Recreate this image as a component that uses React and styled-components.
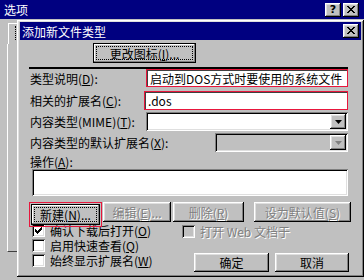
import React from "react";
import styled, { createGlobalStyle } from "styled-components";

const GlobalStyle = createGlobalStyle`
  * { box-sizing: border-box; }
  body { margin: 0; background: #c0c0c0; }
`;

const FONT = `"Noto Sans CJK SC", "Noto Sans", sans-serif`;
const RAISED = `inset -1px -1px #000, inset 1px 1px #fff, inset -2px -2px #808080, inset 2px 2px #dfdfdf`;
const SUNKEN = `inset 1px 1px #808080, inset -1px -1px #fff, inset 2px 2px #000, inset -2px -2px #dfdfdf`;
const MARK = "#e8163c";

const Screen = styled.div`
  position: relative;
  width: 364px;
  height: 280px;
  overflow: hidden;
  background: #c0c0c0;
  font-family: ${FONT};
  font-size: 12px;
  line-height: 13px;
  color: #000;
`;

const TitleBar = styled.div`
  display: flex;
  align-items: center;
  justify-content: space-between;
  height: ${(p) => p.$h}px;
  padding: 0 ${(p) => p.$pr}px 0 ${(p) => p.$pl}px;
  background: #000080;
  color: #fff;
`;

const TitleText = styled.span`
  font-size: 12px;
`;

const TitleButtons = styled.div`
  display: flex;
  gap: 2px;
`;

const CapButton = styled.div`
  display: flex;
  align-items: center;
  justify-content: center;
  width: 16px;
  height: 14px;
  background: #c0c0c0;
  box-shadow: ${RAISED};
  color: #000;
  font-family: "DejaVu Sans", sans-serif;
  font-weight: bold;
  font-size: 11px;
  padding-bottom: 1px;
`;

const OuterBody = styled.div`
  height: 258px;
  border-bottom: 1px solid #404040;
  padding-left: 7px;
`;

const TabHead = styled.div`
  width: 10px;
  height: 21px;
  margin: 4px 0 0 1px;
  border-top: 1px solid #fff;
  border-left: 1px solid #fff;
  padding: 2px 0 0 6px;
`;

const FocusDots = styled.div`
  width: 1px;
  height: 14px;
  border-left: 1px dotted #000;
`;

const TabPanel = styled.div`
  width: 10px;
  height: 208px;
  border-left: 1px solid #fff;
  border-bottom: 1px solid #404040;
`;

const Dialog = styled.div`
  position: absolute;
  left: 17px;
  top: 20px;
  width: 347px;
  height: 257px;
  padding: 2px 3px 3px 3px;
  background: #c0c0c0;
  box-shadow: ${RAISED};
`;

const Body = styled.div`
  display: flex;
  flex-direction: column;
  padding: 0 13px 0 10px;
`;

const Button = styled.div`
  position: relative;
  display: flex;
  align-items: center;
  justify-content: center;
  flex: none;
  width: ${(p) => p.$w}px;
  height: ${(p) => p.$h || 20}px;
  margin-left: ${(p) => p.$ml || 0}px;
  background: #c0c0c0;
  box-shadow: ${(p) =>
    p.$default
      ? `inset 0 0 0 1px #000, inset -2px -2px #808080, inset 2px 2px #fff`
      : RAISED};
  color: ${(p) => (p.$disabled ? "#808080" : "#000")};
  text-shadow: ${(p) => (p.$disabled ? "1px 1px 0 #fff" : "none")};
  white-space: nowrap;
`;

const Focus = styled.span`
  display: flex;
  align-items: center;
  justify-content: center;
  position: absolute;
  inset: 3px;
  border: 1px dotted #000;
`;

const IconRow = styled.div`
  display: flex;
  margin: 3px 0 0 63px;
`;

const Separator = styled.div`
  height: 2px;
  margin: 4px 0 0 -1px;
  background: #000;
`;

const Field = styled.div`
  display: flex;
  align-items: center;
  justify-content: space-between;
  height: ${(p) => p.$h}px;
  margin-top: ${(p) => p.$mt}px;
  white-space: nowrap;
`;

const Label = styled.span`
  white-space: nowrap;
`;

const TextBox = styled.div`
  display: flex;
  align-items: center;
  width: ${(p) => p.$w}px;
  height: 100%;
  padding-left: 3px;
  background: #fff;
  border: 1px solid ${MARK};
  box-shadow: inset 1px 1px #404040;
  white-space: nowrap;
  overflow: hidden;
`;

const Combo = styled.div`
  display: flex;
  justify-content: flex-end;
  align-items: flex-start;
  width: ${(p) => p.$w}px;
  height: 100%;
  padding: 2px;
  background: ${(p) => (p.$disabled ? "#c0c0c0" : "#fff")};
  box-shadow: ${SUNKEN};
`;

const DropButton = styled.div`
  display: flex;
  align-items: center;
  justify-content: center;
  width: 16px;
  height: 100%;
  background: #c0c0c0;
  box-shadow: ${RAISED};
  color: ${(p) => (p.$disabled ? "#808080" : "#000")};
`;

const ListBox = styled.div`
  height: 27px;
  margin: 1px 0 0 2px;
  background: #fff;
  box-shadow: ${SUNKEN};
`;

const ButtonRow = styled.div`
  display: flex;
  align-items: flex-start;
  margin: 6px 0 0 -1px;
`;

const MarkBox = styled.div`
  position: relative;
  z-index: 1;
  padding: 1px;
  border: 1px solid ${MARK};
`;

const Lower = styled.div`
  display: grid;
  grid-template-columns: 150px 1fr;
  margin: -3px 0 0 2px;
`;

const Checks = styled.div`
  display: flex;
  flex-direction: column;
  gap: 2px;
`;

const CheckRow = styled.div`
  display: flex;
  align-items: center;
  gap: 5px;
  height: 13px;
  line-height: 12px;
  white-space: nowrap;
  color: ${(p) => (p.$disabled ? "#808080" : "#000")};
  text-shadow: ${(p) => (p.$disabled ? "1px 1px 0 #fff" : "none")};
`;

const Box = styled.span`
  display: flex;
  align-items: center;
  justify-content: center;
  flex: none;
  width: 13px;
  height: 13px;
  background: ${(p) => (p.$disabled ? "#c0c0c0" : "#fff")};
  box-shadow: ${SUNKEN};
`;

const RightCol = styled.div`
  display: flex;
  flex-direction: column;
  padding-top: 1px;
`;

const DialogButtons = styled.div`
  display: flex;
  gap: 6px;
  margin: 15px 0 0 12px;
`;

const Close = () => (
  <svg width="8" height="7" viewBox="0 0 8 7">
    <path d="M0 0h2v1h1v1h2V1h1V0h2v1H7v1H6v1H5v1h1v1h1v1h1v1H6V6H5V5H3v1H2v1H0V6h1V5h1V4h1V3H2V2H1V1H0z" fill="#000" />
  </svg>
);

const Arrow = () => (
  <svg width="7" height="4" viewBox="0 0 7 4">
    <path d="M0 0h7L3.5 4z" fill="currentColor" />
  </svg>
);

const Tick = () => (
  <svg width="7" height="7" viewBox="0 0 7 7">
    <path d="M0 2h1v1h1v1h1V3h1V2h1V1h1V0h1v3H6v1H5v1H4v1H3v1H2V6H1V5H0z" fill="#000" />
  </svg>
);

const Check = ({ checked, disabled, children }) => (
  <CheckRow $disabled={disabled}>
    <Box $disabled={disabled}>{checked && <Tick />}</Box>
    <span>{children}</span>
  </CheckRow>
);

export default function App() {
  return (
    <Screen>
      <GlobalStyle />
      <TitleBar $h={19} $pl={4} $pr={5}>
        <TitleText>选项</TitleText>
        <TitleButtons>
          <CapButton>?</CapButton>
          <CapButton>
            <Close />
          </CapButton>
        </TitleButtons>
      </TitleBar>
      <OuterBody>
        <TabHead>
          <FocusDots />
        </TabHead>
        <TabPanel />
      </OuterBody>

      <Dialog>
        <TitleBar $h={18} $pl={2} $pr={2}>
          <TitleText>添加新文件类型</TitleText>
          <CapButton>
            <Close />
          </CapButton>
        </TitleBar>
        <Body>
          <IconRow>
            <Button $w={103} $default>
              <Focus>
                更改图标(<u>I</u>)...
              </Focus>
            </Button>
          </IconRow>
          <Separator />
          <Field $h={18} $mt={0}>
            <Label>
              类型说明(<u>D</u>):
            </Label>
            <TextBox $w={202}>启动到DOS方式时要使用的系统文件</TextBox>
          </Field>
          <Field $h={19} $mt={4}>
            <Label>
              相关的扩展名(<u>C</u>):
            </Label>
            <TextBox $w={204}>.dos</TextBox>
          </Field>
          <Field $h={19} $mt={2}>
            <Label>
              内容类型(MIME)(<u>T</u>):
            </Label>
            <Combo $w={202}>
              <DropButton>
                <Arrow />
              </DropButton>
            </Combo>
          </Field>
          <Field $h={19} $mt={2}>
            <Label>
              内容类型的默认扩展名(<u>X</u>):
            </Label>
            <Combo $w={133} $disabled>
              <DropButton $disabled>
                <Arrow />
              </DropButton>
            </Combo>
          </Field>
          <Field $h={14} $mt={2}>
            <Label>
              操作(<u>A</u>):
            </Label>
          </Field>
          <ListBox />
          <ButtonRow>
            <MarkBox>
              <Button $w={69} $h={21} $default>
                <Focus>
                  新建(<u>N</u>)...
                </Focus>
              </Button>
            </MarkBox>
            <Button $w={68} $ml={1} $disabled>
              编辑(<u>E</u>)...
            </Button>
            <Button $w={71} $ml={2} $disabled>
              删除(<u>R</u>)
            </Button>
            <Button $w={97} $ml={10} $disabled>
              设为默认值(<u>S</u>)
            </Button>
          </ButtonRow>
          <Lower>
            <Checks>
              <Check checked>
                确认下载后打开(<u>O</u>)
              </Check>
              <Check>
                启用快速查看(<u>Q</u>)
              </Check>
              <Check>
                始终显示扩展名(<u>W</u>)
              </Check>
            </Checks>
            <RightCol>
              <Check disabled>打开 Web 文档于</Check>
              <DialogButtons>
                <Button $w={75} $h={19}>
                  确定
                </Button>
                <Button $w={74} $h={19}>
                  取消
                </Button>
              </DialogButtons>
            </RightCol>
          </Lower>
        </Body>
      </Dialog>
    </Screen>
  );
}
